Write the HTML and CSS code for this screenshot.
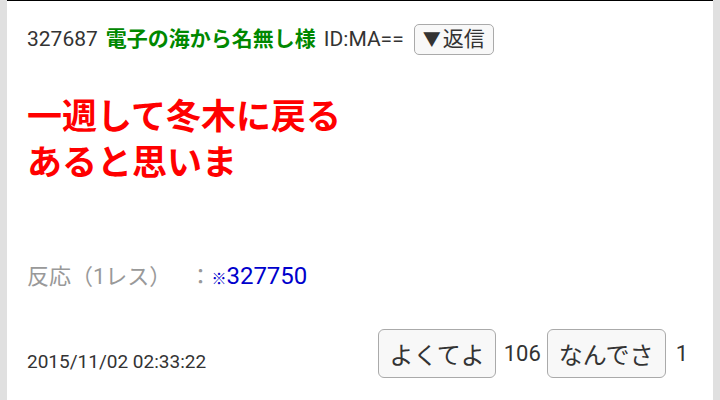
FILE: index.html
```html
<!DOCTYPE html>
<html lang="ja">
<head>
    <meta charset="UTF-8">
    <meta name="viewport" content="width=device-width, initial-scale=1.0">
    <title>327687</title>
    <link rel="stylesheet" href="styles.css">
</head>
<body>
    <div class="thread">
        <article class="post">
            <div class="post-head">
                <span class="post-no">327687</span>
                <span class="post-name">電子の海から名無し様</span>
                <span class="post-id">ID:MA==</span>
                <button class="reply-btn"><span class="tri">▼</span>返信</button>
            </div>

            <div class="post-body">
                一週して冬木に戻る<br>
                あると思いま
            </div>

            <div class="post-refs">
                反応（1レス）<span class="colon">：</span><a href="#327750"><span class="mark">※</span>327750</a>
            </div>

            <div class="post-foot">
                <span class="post-date">2015/11/02 02:33:22</span>
                <div class="votes">
                    <button class="vote-btn">よくてよ</button>
                    <span class="vote-count">106</span>
                    <button class="vote-btn">なんでさ</button>
                    <span class="vote-count">1</span>
                </div>
            </div>
        </article>
    </div>
</body>
</html>
```

FILE: styles.css
```css
/* Basic Styling */
body {
    margin: 0;
    padding: 0;
    font-family: Roboto, "Noto Sans CJK JP", sans-serif;
    color: #333;
    background-color: #e0e0e0;
    text-spacing-trim: space-all;
}

.thread {
    margin: 0 7px;
    height: 400px;
    background-color: #fff;
    border-top: 1px solid #000;
    box-sizing: border-box;
}

.post {
    padding: 22px 20px 0 20px;
}

.post-head {
    display: flex;
    align-items: center;
    gap: 8px;
    font-size: 21px;
    line-height: 32px;
}

.post-name {
    color: #080;
    font-weight: bold;
}

.reply-btn {
    margin-left: 2px;
    height: 31px;
    padding: 0 8px;
    border: 1px solid #aaa;
    border-radius: 5px;
    background-color: #f8f8f8;
    color: #333;
    font-family: inherit;
    font-size: 21px;
    line-height: 29px;
    cursor: pointer;
}

.reply-btn .tri {
    font-size: 18px;
    margin-right: 2px;
}

.post-body {
    margin-top: 40px;
    color: #f00;
    font-size: 35px;
    font-weight: bold;
    line-height: 46px;
}

.post-refs {
    margin-top: 74px;
    color: #999;
    font-size: 22px;
    line-height: 30px;
}

.post-refs .colon {
    margin-left: 18px;
}

.post-refs a {
    color: #00c;
    font-size: 24px;
    text-decoration: none;
}

.post-refs .mark {
    font-size: 15px;
    font-weight: bold;
}

.post-foot {
    margin-top: 35px;
    display: flex;
    justify-content: space-between;
    align-items: flex-end;
}

.post-date {
    font-size: 19px;
    line-height: 24px;
    margin-bottom: 4px;
}

.votes {
    display: flex;
    align-items: center;
    margin-right: 5px;
}

.vote-btn {
    height: 49px;
    padding: 0 11px;
    border: 1px solid #aaa;
    border-radius: 6px;
    background-color: #f8f8f8;
    color: #333;
    font-family: inherit;
    font-size: 24px;
    cursor: pointer;
}

.vote-btn:first-child {
    padding: 0 10px;
}

.vote-count {
    font-size: 22px;
    margin: 0 6px 0 8px;
}

.vote-count:last-child {
    margin: 0 0 0 10px;
}
```
